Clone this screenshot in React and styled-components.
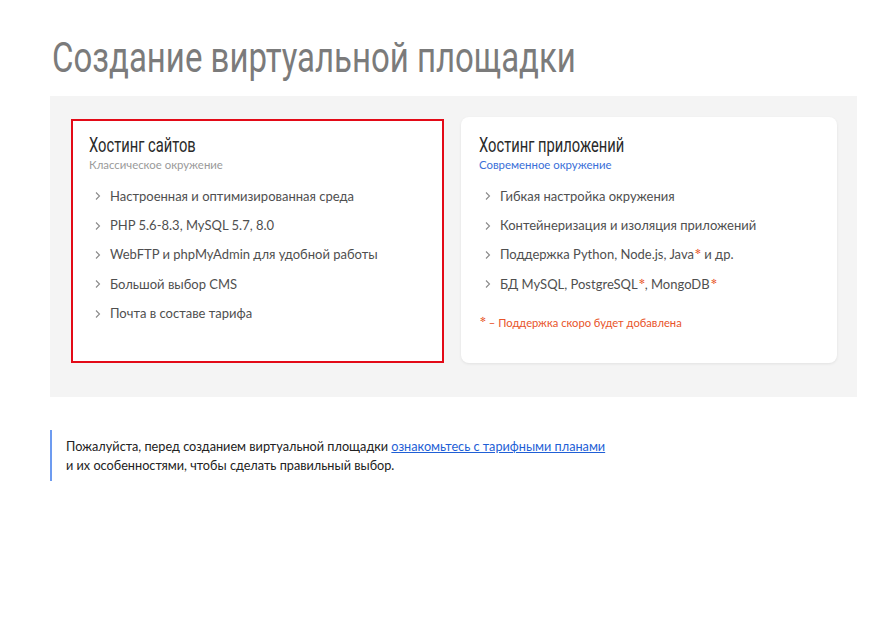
import React from "react";
import styled, { createGlobalStyle } from "styled-components";

const GlobalStyle = createGlobalStyle`
  html, body {
    margin: 0;
    padding: 0;
    background: #fff;
    font-family: "Lato", "Noto Sans", sans-serif;
  }
`;

const Page = styled.div`
  width: 807px;
  padding: 34px 0 40px 50px;
`;

const Title = styled.h1`
  display: inline-block;
  margin: 0 0 14px 2px;
  font-family: "Roboto", sans-serif;
  font-weight: 400;
  font-size: 42px;
  line-height: 48px;
  color: #7b7b7b;
  transform: scaleX(0.785);
  transform-origin: left center;
  white-space: nowrap;
`;

const Panel = styled.section`
  background: #f4f4f4;
  padding: 21px 20px 34px 21px;
  display: grid;
  grid-template-columns: 373px 1fr;
  gap: 17px;
`;

const Card = styled.div`
  background: #fff;
  border-radius: ${(p) => (p.$selected ? "0" : "8px")};
  border: 2px solid ${(p) => (p.$selected ? "#e30a17" : "transparent")};
  box-shadow: ${(p) => (p.$selected ? "none" : "0 1px 3px rgba(0,0,0,0.08)")};
  padding: ${(p) => (p.$selected ? "11px" : "13px")} 18px 26px 16px;
  min-height: 244px;
  box-sizing: border-box;
  margin-top: ${(p) => (p.$selected ? "2px" : "0")};
`;

const CardTitle = styled.h2`
  display: inline-block;
  margin: 0;
  font-family: "Roboto", sans-serif;
  font-weight: 400;
  font-size: 21px;
  line-height: 26px;
  color: #2a2a2a;
  transform: scaleX(0.7);
  transform-origin: left center;
  white-space: nowrap;
`;

const Subtitle = styled.div`
  font-size: 11.4px;
  line-height: 14px;
  color: ${(p) => (p.$accent ? "#3a6fd8" : "#9a9a9a")};
  margin-bottom: 9px;
`;

const List = styled.ul`
  list-style: none;
  margin: 0;
  padding: 0 0 0 5px;
`;

const Item = styled.li`
  display: flex;
  align-items: center;
  gap: 8px;
  height: 29.4px;
  font-size: 13px;
  color: #4f4f4f;
`;

const Chevron = styled.svg`
  width: 8px;
  height: 10px;
  flex: none;
  margin-top: 1px;
`;

const Star = styled.span`
  color: #e8542a;
  font-size: 7px;
  vertical-align: 5px;
  margin-left: 1px;
`;

const Note = styled.div`
  margin-top: 16px;
  font-size: 11.2px;
  color: #e8542a;
`;

const Notice = styled.div`
  margin-top: 33px;
  border-left: 2px solid #6d9bf0;
  padding: 7px 0 6px 14px;
  font-size: 12.7px;
  line-height: 19px;
  color: #222;
`;

const Link = styled.a`
  color: #1f5fd6;
  text-decoration: underline;
`;

const Arrow = () => (
  <Chevron viewBox="0 0 8 10">
    <path d="M2 1.5L5.5 5L2 8.5" fill="none" stroke="#8a8a8a" strokeWidth="1.1" />
  </Chevron>
);

const Feature = ({ children }) => (
  <Item>
    <Arrow />
    <span>{children}</span>
  </Item>
);

const sites = [
  "Настроенная и оптимизированная среда",
  "PHP 5.6-8.3, MySQL 5.7, 8.0",
  "WebFTP и phpMyAdmin для удобной работы",
  "Большой выбор CMS",
  "Почта в составе тарифа",
];

export default function App() {
  return (
    <>
      <GlobalStyle />
      <Page>
        <Title>Создание виртуальной площадки</Title>
        <Panel>
          <Card $selected>
            <CardTitle>Хостинг сайтов</CardTitle>
            <Subtitle>Классическое окружение</Subtitle>
            <List>
              {sites.map((s) => (
                <Feature key={s}>{s}</Feature>
              ))}
            </List>
          </Card>
          <Card>
            <CardTitle>Хостинг приложений</CardTitle>
            <Subtitle $accent>Современное окружение</Subtitle>
            <List>
              <Feature>Гибкая настройка окружения</Feature>
              <Feature>Контейнеризация и изоляция приложений</Feature>
              <Feature>
                Поддержка Python, Node.js, Java<Star>✻</Star> и др.
              </Feature>
              <Feature>
                БД MySQL, PostgreSQL<Star>✻</Star>, MongoDB<Star>✻</Star>
              </Feature>
            </List>
            <Note>
              <Star>✻</Star> – Поддержка скоро будет добавлена
            </Note>
          </Card>
        </Panel>
        <Notice>
          Пожалуйста, перед созданием виртуальной площадки{" "}
          <Link href="#">ознакомьтесь с тарифными планами</Link>
          <br />и их особенностями, чтобы сделать правильный выбор.
        </Notice>
      </Page>
    </>
  );
}
